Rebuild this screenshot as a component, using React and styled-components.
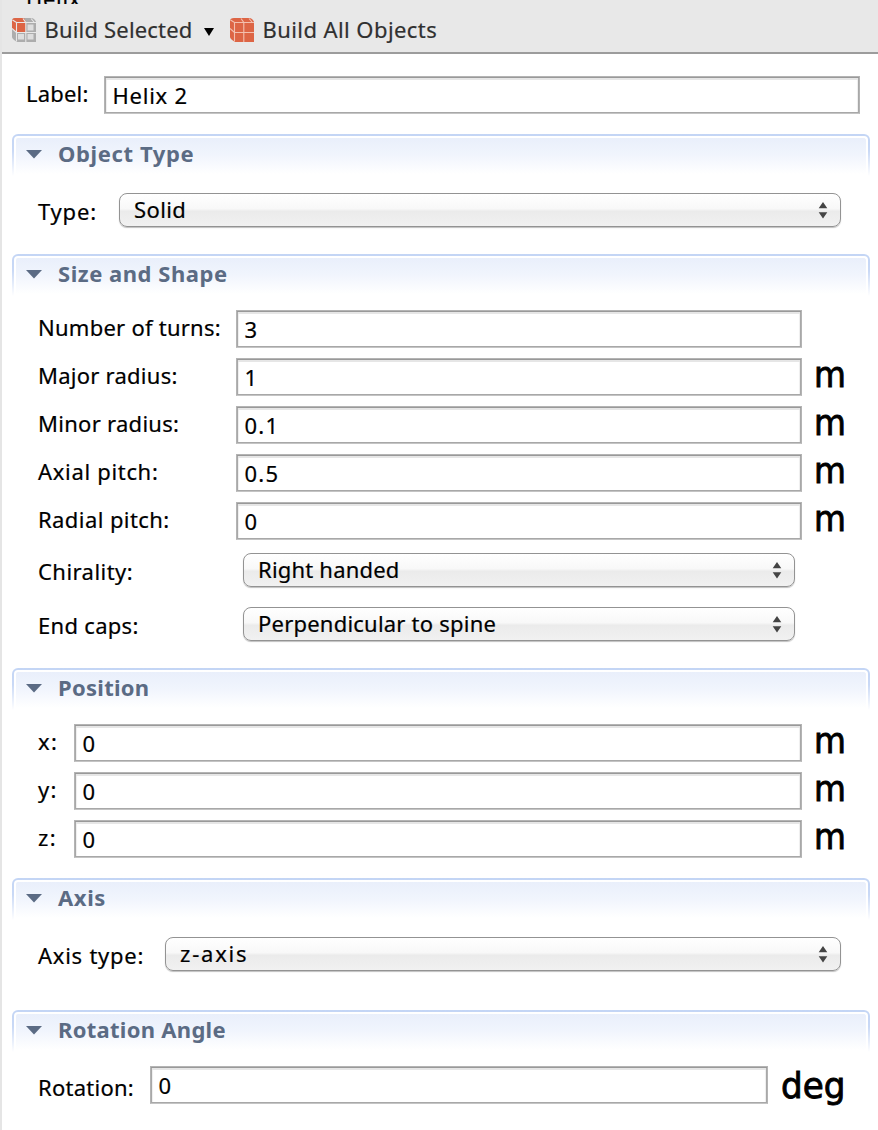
import React from 'react';
import styled, { createGlobalStyle } from 'styled-components';

const Global = createGlobalStyle`
  * { box-sizing: border-box; }
  body { margin: 0; background: #fff; }
`;

const Panel = styled.div`
  width: 878px;
  height: 1130px;
  overflow: hidden;
  border-left: 2px solid #e5e5e5;
  background: #fff;
  color: #000;
  font-family: "Noto Sans", "Open Sans", sans-serif;
  font-size: 22px;
  -webkit-text-stroke-width: 0.2px;
`;

const Toolbar = styled.header`
  height: 54px;
  margin-left: -2px;
  background: #e8e8e8;
  box-shadow: inset 2px 0 #e5e5e5;
`;

const ToolbarTitle = styled.div`
  display: flex;
  align-items: flex-end;
  height: 4px;
  padding-left: 26px;
  overflow: hidden;
  letter-spacing: 0.7px;
  span {
    height: 9px;
    line-height: 7px;
  }
`;

const ToolbarRow = styled.div`
  display: flex;
  align-items: flex-start;
  height: 50px;
  margin-left: 2px;
  padding-left: 10px;
  border-bottom: 2px solid #9c9c9c;
`;

const CubeSvg = styled.svg`
  width: 24px;
  height: 24px;
  margin-top: 14px;
  flex: none;
`;

const ToolText = styled.span`
  width: ${(p) => p.$w}px;
  margin-left: 8.5px;
  padding-top: 7px;
  line-height: 36px;
  color: #303030;
  white-space: nowrap;
  letter-spacing: ${(p) => p.$ls}px;
`;

const DropArrow = styled.svg`
  width: 10px;
  height: 8px;
  margin: 24px 16px 0 10.5px;
`;

const LabelRow = styled.div`
  display: grid;
  grid-template-columns: 78px 756px;
  padding: 22px 0 0 24px;
  height: 80px;
`;

const Section = styled.section`
  height: ${(p) => p.$h}px;
  margin: 0 8px 0 10px;
`;

const HeaderFrame = styled.div`
  height: 42px;
  padding: 2px 2px 0;
  border-radius: 6px 6px 0 0;
  background: linear-gradient(#c3d5f5 0, #c9d9f6 40%, #fff 100%);
`;

const HeaderFill = styled.div`
  display: flex;
  height: 40px;
  padding-left: 10px;
  border: 2px solid #fff;
  border-bottom: 0;
  border-radius: 4px 4px 0 0;
  background: linear-gradient(#e9effb, #f1f5fd 45%, #fff 95%);
`;

const Twisty = styled.svg`
  width: 16px;
  height: 9px;
  margin-top: 12px;
  flex: none;
`;

const Title = styled.h2`
  margin: 0 0 0 16px;
  font-size: 22px;
  font-weight: 700;
  line-height: 31px;
  white-space: nowrap;
  color: #5b6b84;
  letter-spacing: ${(p) => p.$ls}px;
  -webkit-text-stroke-width: 0;
`;

const Fields = styled.div`
  padding: ${(p) => p.$top}px 0 0 26px;
`;

const Row = styled.div`
  display: grid;
  grid-template-columns: ${(p) => p.$cols};
  align-items: start;
  height: ${(p) => p.$h || 48}px;
  margin-top: ${(p) => p.$gap || 0}px;
`;

const Label = styled.label`
  padding-top: ${(p) => p.$drop || 0}px;
  line-height: 34px;
  white-space: nowrap;
  letter-spacing: ${(p) => p.$ls}px;
`;

const Input = styled.div`
  height: 38px;
  padding-left: 7.5px;
  border: 1px solid #b4b4b4;
  border-bottom-color: #c4c4c4;
  box-shadow: inset 0 1px #999, inset 0 0 0 1px #a8a8a8, inset 0 3px #e6e6e6, inset 2px 0 1px #eee, inset -2px 0 1px #eee;
  line-height: 37px;
  background: #fff;
  white-space: nowrap;
  letter-spacing: ${(p) => p.$ls || 0}px;
`;

const SelectBox = styled.div`
  display: flex;
  justify-content: space-between;
  align-items: flex-start;
  width: ${(p) => p.$w}px;
  height: 34px;
  margin-left: ${(p) => p.$x || 0}px;
  padding: 0 12px 0 14.5px;
  border: 1.5px solid #939393;
  border-radius: 8px;
  background: linear-gradient(#fff 0, #f8f8f8 46%, #ebebeb 54%, #f1f1f1 100%);
  box-shadow: 0 1px 1px rgba(0, 0, 0, 0.25);
  line-height: 30px;
  white-space: nowrap;
  letter-spacing: ${(p) => p.$ls}px;
`;

const Stepper = styled.svg`
  width: 10px;
  height: 17px;
  margin-top: 8px;
`;

const Unit = styled.span`
  justify-self: start;
  margin: ${(p) => p.$top}px 0 0 ${(p) => p.$x}px;
  font-family: "DejaVu Sans", sans-serif;
  font-size: 36px;
  line-height: 38px;
  transform: scaleX(${(p) => p.$squeeze});
  transform-origin: left center;
  -webkit-text-stroke-width: 0.9px;
`;

function Cube({ all }) {
  const red = '#dd6545';
  const rest = all ? red : '#adadad';
  const grid = all ? '#f3bfae' : '#e8e8e8';
  return (
    <CubeSvg viewBox="0 0 24 24">
      <path d="M4 0H20Q22 0 24 3.500V24H5Q0 21 0 19V3Q0 0 4 0Z" fill={rest} />
      {!all && <path d="M6 5h6.500v8H6zM15.500 6.500h6v6h-6zM6 16h6v5.500H6zM15.500 16h6v5.500h-6z" fill="#dedede" />}
      {!all && <path d="M3 0H12L14 4V14H4L0 11V3Q0 0 3 0Z" fill={red} />}
      <path
        d="M0.500 2L4.500 4.500H24M4.500 4.500V23.500M11 0.500L13.800 4.500V24M4.500 14.500H24M0 10.500L4.500 14.500M19 0.500L22 4"
        fill="none"
        stroke={grid}
        strokeWidth="1.100"
      />
    </CubeSvg>
  );
}

function Header({ text, ls }) {
  return (
    <HeaderFrame>
      <HeaderFill>
        <Twisty viewBox="0 0 16 9"><path d="M0 0H16L8 8.500Z" fill="#5b6b84" /></Twisty>
        <Title $ls={ls}>{text}</Title>
      </HeaderFill>
    </HeaderFrame>
  );
}

function Select({ text, ...rest }) {
  return (
    <SelectBox {...rest}>
      {text}
      <Stepper viewBox="0 0 10 17"><path d="M5 0L9.300 6.300H0.700ZM5 16.500L9.300 10.200H0.700Z" fill="#444" /></Stepper>
    </SelectBox>
  );
}

const sizes = [
  { label: 'Number of turns:', ls: 0.25, value: '3' },
  { label: 'Major radius:', ls: 0.25, value: '1', unit: 'm' },
  { label: 'Minor radius:', ls: 0.28, value: '0.1', unit: 'm' },
  { label: 'Axial pitch:', ls: 0.68, value: '0.5', unit: 'm' },
  { label: 'Radial pitch:', ls: 0.42, value: '0', unit: 'm' },
];

const positions = [
  { label: 'x:', value: '0' },
  { label: 'y:', value: '0' },
  { label: 'z:', value: '0' },
];

export default function App() {
  return (
    <Panel>
      <Global />
      <Toolbar>
        <ToolbarTitle><span>Helix</span></ToolbarTitle>
        <ToolbarRow>
          <Cube />
          <ToolText $w={149} $ls={0.18}>Build Selected</ToolText>
          <DropArrow viewBox="0 0 10 8"><path d="M0 0H10L5 8Z" fill="#000" /></DropArrow>
          <Cube all />
          <ToolText $w={180} $ls={0.42}>Build All Objects</ToolText>
        </ToolbarRow>
      </Toolbar>

      <LabelRow>
        <Label $ls={0.2}>Label:</Label>
        <Input $ls={0.75}>Helix 2</Input>
      </LabelRow>

      <Section $h={120}>
        <Header text="Object Type" ls={0.62} />
        <Fields $top={17}>
          <Row $cols="80.5px 1fr">
            <Label $ls={0.8} $drop={1}>Type:</Label>
            <Select text="Solid" $ls={0.4} $w={722.5} />
          </Row>
        </Fields>
      </Section>

      <Section $h={414}>
        <Header text="Size and Shape" ls={0.53} />
        <Fields $top={14}>
          {sizes.map((r) => (
            <Row key={r.label} $cols="198px 566px 1fr">
              <Label $ls={r.ls}>{r.label}</Label>
              <Input $ls={r.value.length > 1 ? 1.2 : 0}>{r.value}</Input>
              {r.unit && <Unit $top={-2} $x={12} $squeeze={0.91}>{r.unit}</Unit>}
            </Row>
          ))}
          <Row $cols="198px 1fr" $h={54} $gap={3}>
            <Label $ls={0.45} $drop={1}>Chirality:</Label>
            <Select text="Right handed" $ls={0.2} $x={6.5} $w={552.5} />
          </Row>
          <Row $cols="198px 1fr" $h={54}>
            <Label $ls={0.3} $drop={1}>End caps:</Label>
            <Select text="Perpendicular to spine" $ls={0.22} $x={6.5} $w={552.5} />
          </Row>
        </Fields>
      </Section>

      <Section $h={210}>
        <Header text="Position" ls={0.28} />
        <Fields $top={14}>
          {positions.map((r) => (
            <Row key={r.label} $cols="36px 728px 1fr">
              <Label $ls={1.3}>{r.label}</Label>
              <Input>{r.value}</Input>
              <Unit $top={-2} $x={12} $squeeze={0.91}>m</Unit>
            </Row>
          ))}
        </Fields>
      </Section>

      <Section $h={132}>
        <Header text="Axis" ls={0.6} />
        <Fields $top={17}>
          <Row $cols="126.5px 1fr">
            <Label $ls={0.75} $drop={1}>Axis type:</Label>
            <Select text="z-axis" $ls={1.8} $w={676.5} />
          </Row>
        </Fields>
      </Section>

      <Section $h={120}>
        <Header text="Rotation Angle" ls={0.28} />
        <Fields $top={14}>
          <Row $cols="112px 618px 1fr">
            <Label $ls={0.25} $drop={4}>Rotation:</Label>
            <Input>0</Input>
            <Unit $top={1} $x={13} $squeeze={0.95}>deg</Unit>
          </Row>
        </Fields>
      </Section>
    </Panel>
  );
}
